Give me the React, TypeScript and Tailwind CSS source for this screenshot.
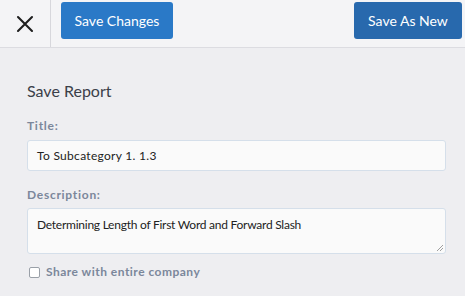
import React from 'react';

export default function App() {
  const font = { fontFamily: 'Lato, "Open Sans", sans-serif' };
  return (
    <div className="w-[465px] h-[296px] bg-[#eeeef1] text-[#333]" style={font}>
      <header className="h-12 flex items-start bg-[#f4f4f6] border-b border-[#dcdce1]">
        <button className="w-[51px] h-[47px] flex items-center justify-center border-r border-[#d7d7dc]">
          <svg width="18" height="18" viewBox="0 0 18 18" fill="none" stroke="#1f1f1f" strokeWidth="2.1" strokeLinecap="round">
            <path d="M2 2 L16 16 M16 2 L2 16" />
          </svg>
        </button>
        <button className="ml-[10px] mt-[2px] w-[112px] h-[37px] rounded-[3px] bg-[#2a79c7] text-white text-[14px]">
          Save Changes
        </button>
        <button className="ml-auto mr-[3px] mt-[2px] w-[108px] h-[37px] rounded-[3px] bg-[#2869ad] text-white text-[14px]">
          Save As New
        </button>
      </header>
      <main className="pl-[27px] pr-[19px] pt-[33px]">
        <h2 className="text-[16px] leading-5 text-[#3b4049]">Save Report</h2>
        <label className="block mt-[17px] text-[12px] leading-4 font-bold tracking-[0.06em] text-[#7b879b]">Title:</label>
        <div className="mt-[6px] h-[31px] rounded-[3px] border border-[#d5dfea] bg-[#fafafa] flex items-center px-[9px] text-[12px] tracking-[0.3px] text-[#222]">
          To Subcategory 1. 1.3
        </div>
        <label className="block mt-[16px] text-[12px] leading-4 font-bold tracking-[0.06em] text-[#7b879b]">Description:</label>
        <div className="relative mt-[5px] h-[46px] rounded-[3px] border border-[#d5dfea] bg-[#fafafa] px-[9px] pt-[7px] text-[12px] tracking-[-0.25px] text-[#222]">
          Determining Length of First Word and Forward Slash
          <svg className="absolute right-[1px] bottom-[1px]" width="8" height="8" viewBox="0 0 8 8" stroke="#888" strokeWidth="0.8">
            <path d="M1 7 L7 1 M4 7 L7 4" />
          </svg>
        </div>
        <label className="mt-[9px] flex items-center gap-[6px] text-[12px] font-bold tracking-[0.04em] text-[#7b879b]">
          <span className="ml-[2px] w-[11px] h-[11px] rounded-[2px] border border-[#9aa0a8] bg-white" />
          Share with entire company
        </label>
      </main>
    </div>
  );
}
